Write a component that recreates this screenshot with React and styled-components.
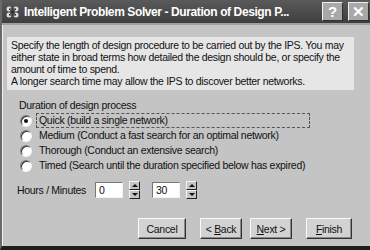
import React from "react";
import styled, { createGlobalStyle } from "styled-components";

const Global = createGlobalStyle`
  body {
    margin: 0;
    background: #c4c4c4;
  }
`;

const Window = styled.div`
  width: 370px;
  height: 250px;
  box-sizing: border-box;
  background: #c4c4c4;
  border-left: 2px solid #6a6a6a;
  border-bottom: 4px solid #1e1e1e;
  box-shadow: inset 1px 0 0 #f2f2f2;
  display: flex;
  flex-direction: column;
  font-family: "Liberation Sans", Arial, sans-serif;
  font-size: 10.5px;
  letter-spacing: -0.3px;
  color: #111;
  overflow: hidden;
`;

const TitleBar = styled.div`
  height: 23px;
  background: linear-gradient(#5a5a5a, #3e3e3e);
  display: flex;
  align-items: center;
  padding: 0 1px 0 3px;
  gap: 3px;
  border-bottom: 2px solid #a0a0a0;
`;

const AppIcon = styled.svg`
  width: 16px;
  height: 14px;
  flex: none;
`;

const Title = styled.div`
  flex: 1;
  color: #fff;
  font-weight: bold;
  font-size: 12px;
  letter-spacing: -0.4px;
  white-space: nowrap;
  overflow: hidden;
`;

const CapButton = styled.div`
  width: 21px;
  height: 19px;
  box-sizing: border-box;
  background: #a8a8a8;
  border: 1px solid;
  border-color: #f0f0f0 #303030 #303030 #f0f0f0;
  color: #fff;
  font-weight: bold;
  font-size: 15px;
  letter-spacing: 0;
  display: flex;
  align-items: center;
  justify-content: center;
  margin-left: 2px;
`;

const Body = styled.div`
  flex: 1;
  display: flex;
  flex-direction: column;
  padding: 12px 16px 0 5px;
`;

const Intro = styled.div`
  background: #e6e6e6;
  padding: 2px 2px 3px 4px;
  line-height: 12px;
  white-space: nowrap;
`;

const Group = styled.div`
  padding: 9px 0 0 12px;
`;

const GroupLabel = styled.div`
  line-height: 12px;
  margin-bottom: 2px;
`;

const RadioRow = styled.div`
  display: flex;
  align-items: center;
  height: 15px;
  padding-left: 1px;
  gap: 4px;
`;

const RadioDot = styled.span`
  width: 12px;
  height: 12px;
  box-sizing: border-box;
  border-radius: 50%;
  background: #fff;
  border: 1px solid;
  border-color: #7a7a7a #f4f4f4 #f4f4f4 #7a7a7a;
  box-shadow: inset 1px 1px 0 #333;
  display: flex;
  align-items: center;
  justify-content: center;
  flex: none;
  &::after {
    content: "";
    width: 4px;
    height: 4px;
    border-radius: 50%;
    background: ${(p) => (p.checked ? "#111" : "transparent")};
  }
`;

const RadioLabel = styled.span`
  padding: 0 2px;
  line-height: 13px;
  border: 1px dashed ${(p) => (p.focused ? "#555" : "transparent")};
  width: ${(p) => (p.focused ? "268px" : "auto")};
  white-space: nowrap;
`;

const TimeRow = styled.div`
  display: flex;
  align-items: center;
  margin: 8px 0 0 10px;
  gap: 6px;
`;

const TimeLabel = styled.span`
  width: 72px;
`;

const Field = styled.div`
  width: 28px;
  height: 16px;
  box-sizing: border-box;
  background: #fff;
  border: 1px solid;
  border-color: #777 #f4f4f4 #f4f4f4 #777;
  padding-left: 3px;
  line-height: 14px;
`;

const Spin = styled.div`
  width: 11px;
  height: 18px;
  display: flex;
  flex-direction: column;
  margin-right: 6px;
`;

const SpinHalf = styled.div`
  flex: 1;
  background: #c4c4c4;
  border: 1px solid;
  border-color: #f4f4f4 #222 #222 #f4f4f4;
  display: flex;
  align-items: center;
  justify-content: center;
  &::after {
    content: "";
    border-left: 3px solid transparent;
    border-right: 3px solid transparent;
    ${(p) =>
      p.up ? "border-bottom: 3px solid #111;" : "border-top: 3px solid #111;"}
  }
`;

const Buttons = styled.div`
  display: flex;
  justify-content: flex-end;
  gap: 8px;
  margin-top: 19px;
  padding-right: 2px;
`;

const Button = styled.div`
  width: ${(p) => p.w || 46}px;
  height: 21px;
  box-sizing: border-box;
  background: #d2d2d2;
  border: 1px solid;
  border-color: #fafafa #333 #333 #fafafa;
  box-shadow: inset -1px -1px 0 #8a8a8a;
  display: flex;
  align-items: center;
  justify-content: center;
  margin-left: ${(p) => p.gapLeft || 0}px;
  u {
    text-decoration: underline;
  }
`;

const radios = [
  { label: "Quick (build a single network)", checked: true },
  { label: "Medium (Conduct a fast search for an optimal network)" },
  { label: "Thorough (Conduct an extensive search)" },
  { label: "Timed (Search until the duration specified below has expired)" },
];

export default function App() {
  return (
    <>
      <Global />
      <Window>
        <TitleBar>
          <AppIcon viewBox="0 0 16 14">
            <circle cx="4" cy="4" r="2.5" fill="#ddd" />
            <circle cx="11" cy="4" r="2.5" fill="#ddd" />
            <circle cx="4" cy="10" r="2.5" fill="#ddd" />
            <circle cx="11" cy="10" r="2.5" fill="#ddd" />
            <path d="M4 4L11 10M11 4L4 10M4 4H11M4 10H11" stroke="#222" strokeWidth="1" />
          </AppIcon>
          <Title>Intelligent Problem Solver - Duration of Design P...</Title>
          <CapButton>?</CapButton>
          <CapButton>✕</CapButton>
        </TitleBar>
        <Body>
          <Intro>
            Specify the length of design procedure to be carried out by the IPS. You may
            <br />
            either state in broad terms how detailed the design should be, or specify the
            <br />
            amount of time to spend.
            <br />
            A longer search time may allow the IPS to discover better networks.
          </Intro>
          <Group>
            <GroupLabel>Duration of design process</GroupLabel>
            {radios.map((r, i) => (
              <RadioRow key={i}>
                <RadioDot checked={r.checked} />
                <RadioLabel focused={r.checked}>{r.label}</RadioLabel>
              </RadioRow>
            ))}
          </Group>
          <TimeRow>
            <TimeLabel>Hours / Minutes</TimeLabel>
            <Field>0</Field>
            <Spin>
              <SpinHalf up />
              <SpinHalf />
            </Spin>
            <Field>30</Field>
            <Spin>
              <SpinHalf up />
              <SpinHalf />
            </Spin>
          </TimeRow>
          <Buttons>
            <Button w={48}>Cancel</Button>
            <Button w={42} gapLeft={6}>
              &lt;&nbsp;<u>B</u>ack
            </Button>
            <Button w={42}>
              <u>N</u>ext &gt;
            </Button>
            <Button w={46} gapLeft={6}>
              <u>F</u>inish
            </Button>
          </Buttons>
        </Body>
      </Window>
    </>
  );
}
